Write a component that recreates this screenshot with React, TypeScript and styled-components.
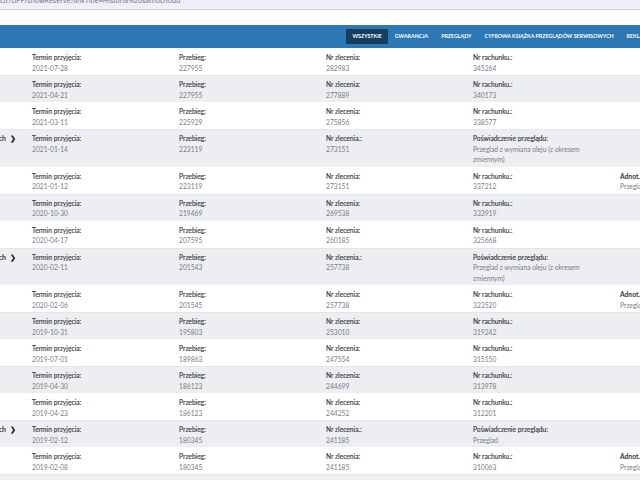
import React from 'react'
import styled, { createGlobalStyle } from 'styled-components'

const GlobalStyle = createGlobalStyle`
  html, body {
    margin: 0;
    padding: 0;
    background: #ffffff;
    overflow: hidden;
  }
  body {
    font-family: Lato, "Open Sans", sans-serif;
  }
`

const Page = styled.div`
  width: 640px;
  height: 480px;
  overflow: hidden;
  background: #ffffff;
`

const UrlBar = styled.div`
  height: 9px;
  background: #eef0f5;
  border-bottom: 1px solid #cdd0d6;
  overflow: hidden;
`

const UrlText = styled.div`
  font-family: "Open Sans", sans-serif;
  font-size: 7px;
  line-height: 7px;
  color: #6b6f78;
  margin-top: -3px;
  white-space: nowrap;
`

const Strip = styled.div`
  height: 15px;
  background: #fdfdfd;
`

const NavBar = styled.nav`
  height: 23px;
  background: #2e77b5;
  border-bottom: 1px solid #2a6aa1;
  display: flex;
  align-items: center;
  white-space: nowrap;
  overflow: hidden;
`

const Tabs = styled.div`
  display: flex;
  margin-left: 346px;
`

const Tab = styled.div<{ $active?: boolean }>`
  font-family: Lato, sans-serif;
  font-weight: 700;
  font-size: 5.3px;
  line-height: 15px;
  height: 15px;
  padding: 0 6.5px;
  color: #ffffff;
  text-transform: uppercase;
  background: ${({ $active }) => ($active ? '#163e5e' : 'transparent')};
  border-radius: 1px;
`

const Table = styled.div`
  margin-left: -115px;
`

const Row = styled.div<{ $odd: boolean }>`
  display: grid;
  grid-template-columns: repeat(6, 147px);
  padding: 3px 0;
  background: ${({ $odd }) => ($odd ? '#eceef2' : '#ffffff')};
  border-top: 1px solid ${({ $odd }) => ($odd ? '#e2e5ea' : '#ffffff')};
  margin-top: -1px;
`

const LinkCell = styled.div`
  text-align: right;
  padding-right: 16px;
  font-size: 7px;
  font-weight: 700;
  line-height: 10.5px;
  color: #34373d;
  white-space: nowrap;
  overflow: hidden;
`

const Chevron = styled.span`
  display: inline-block;
  margin-left: 4px;
  font-weight: 900;
  font-size: 6.5px;
  color: #222;
`

const Cell = styled.div<{ $wrap?: boolean }>`
  font-size: 6.7px;
  line-height: 10.5px;
  max-width: ${({ $wrap }) => ($wrap ? '116px' : 'none')};
  white-space: ${({ $wrap }) => ($wrap ? 'normal' : 'nowrap')};
`

const Label = styled.div<{ $strong?: boolean }>`
  color: ${({ $strong }) => ($strong ? '#33363c' : '#3d4047')};
  font-weight: ${({ $strong }) => ($strong ? 700 : 400)};
  -webkit-text-stroke: ${({ $strong }) => ($strong ? '0' : '0.15px #3d4047')};
`

const Value = styled.div`
  color: #7a7d84;
`

type Visit = {
  date: string
  km: string
  order: string
  bill?: string
  cert?: string
  note?: boolean
}

const visits: Visit[] = [
  { date: '2021-07-28', km: '227955', order: '282983', bill: '345264' },
  { date: '2021-04-21', km: '227955', order: '277889', bill: '340173' },
  { date: '2021-03-11', km: '225929', order: '275856', bill: '338577' },
  { date: '2021-01-14', km: '223119', order: '273151', cert: 'Przeglad z wymiana oleju (z okresem zmiennym)' },
  { date: '2021-01-12', km: '223119', order: '273151', bill: '337212', note: true },
  { date: '2020-10-30', km: '219469', order: '269538', bill: '333919' },
  { date: '2020-04-17', km: '207595', order: '260185', bill: '325668' },
  { date: '2020-02-11', km: '201543', order: '257738', cert: 'Przeglad z wymiana oleju (z okresem zmiennym)' },
  { date: '2020-02-06', km: '201545', order: '257738', bill: '323520', note: true },
  { date: '2019-10-31', km: '195803', order: '253010', bill: '319242' },
  { date: '2019-07-01', km: '189863', order: '247554', bill: '315150' },
  { date: '2019-04-30', km: '186123', order: '244699', bill: '313978' },
  { date: '2019-04-23', km: '186123', order: '244252', bill: '312201' },
  { date: '2019-02-12', km: '180345', order: '241185', cert: 'Przeglad' },
  { date: '2019-02-08', km: '180345', order: '241185', bill: '310063', note: true },
  { date: '2019-01-17', km: '178620', order: '239904', bill: '308412' },
]

const tabs = ['Wszystkie', 'Gwarancja', 'Przeglądy', 'Cyfrowa książka przeglądów serwisowych', 'Reklamacje']

const Field = ({ label, value, wrap, strong }: { label: string; value: string; wrap?: boolean; strong?: boolean }) => (
  <Cell $wrap={wrap}>
    <Label $strong={strong}>{label}</Label>
    <Value>{value}</Value>
  </Cell>
)

const App = () => (
  <Page>
    <GlobalStyle />
    <UrlBar>
      <UrlText>ctr/DPP/showReserve?linkTitle=Historia%20samochodu</UrlText>
    </UrlBar>
    <Strip />
    <NavBar>
      <Tabs>
        {tabs.map((t, i) => (
          <Tab key={t} $active={i === 0}>
            {t}
          </Tab>
        ))}
      </Tabs>
    </NavBar>
    <Table>
      {visits.map((v, i) => (
        <Row key={v.date + i} $odd={i % 2 === 1}>
          <LinkCell>
            {v.cert && (
              <>
                Szczegóły w dokumentach<Chevron>❯</Chevron>
              </>
            )}
          </LinkCell>
          <Field label="Termin przyjęcia:" value={v.date} />
          <Field label="Przebieg:" value={v.km} />
          <Field label={v.cert ? 'Nr zlecenia.:' : 'Nr zlecenia:'} value={v.order} />
          {v.cert ? (
            <Field label="Poświadczenie przeglądu:" value={v.cert} wrap />
          ) : (
            <Field label="Nr rachunku.:" value={v.bill ?? ''} />
          )}
          {v.note ? <Field label="Adnot." value="Przegląd okresowy" strong /> : <Cell />}
        </Row>
      ))}
    </Table>
  </Page>
)

export default App
